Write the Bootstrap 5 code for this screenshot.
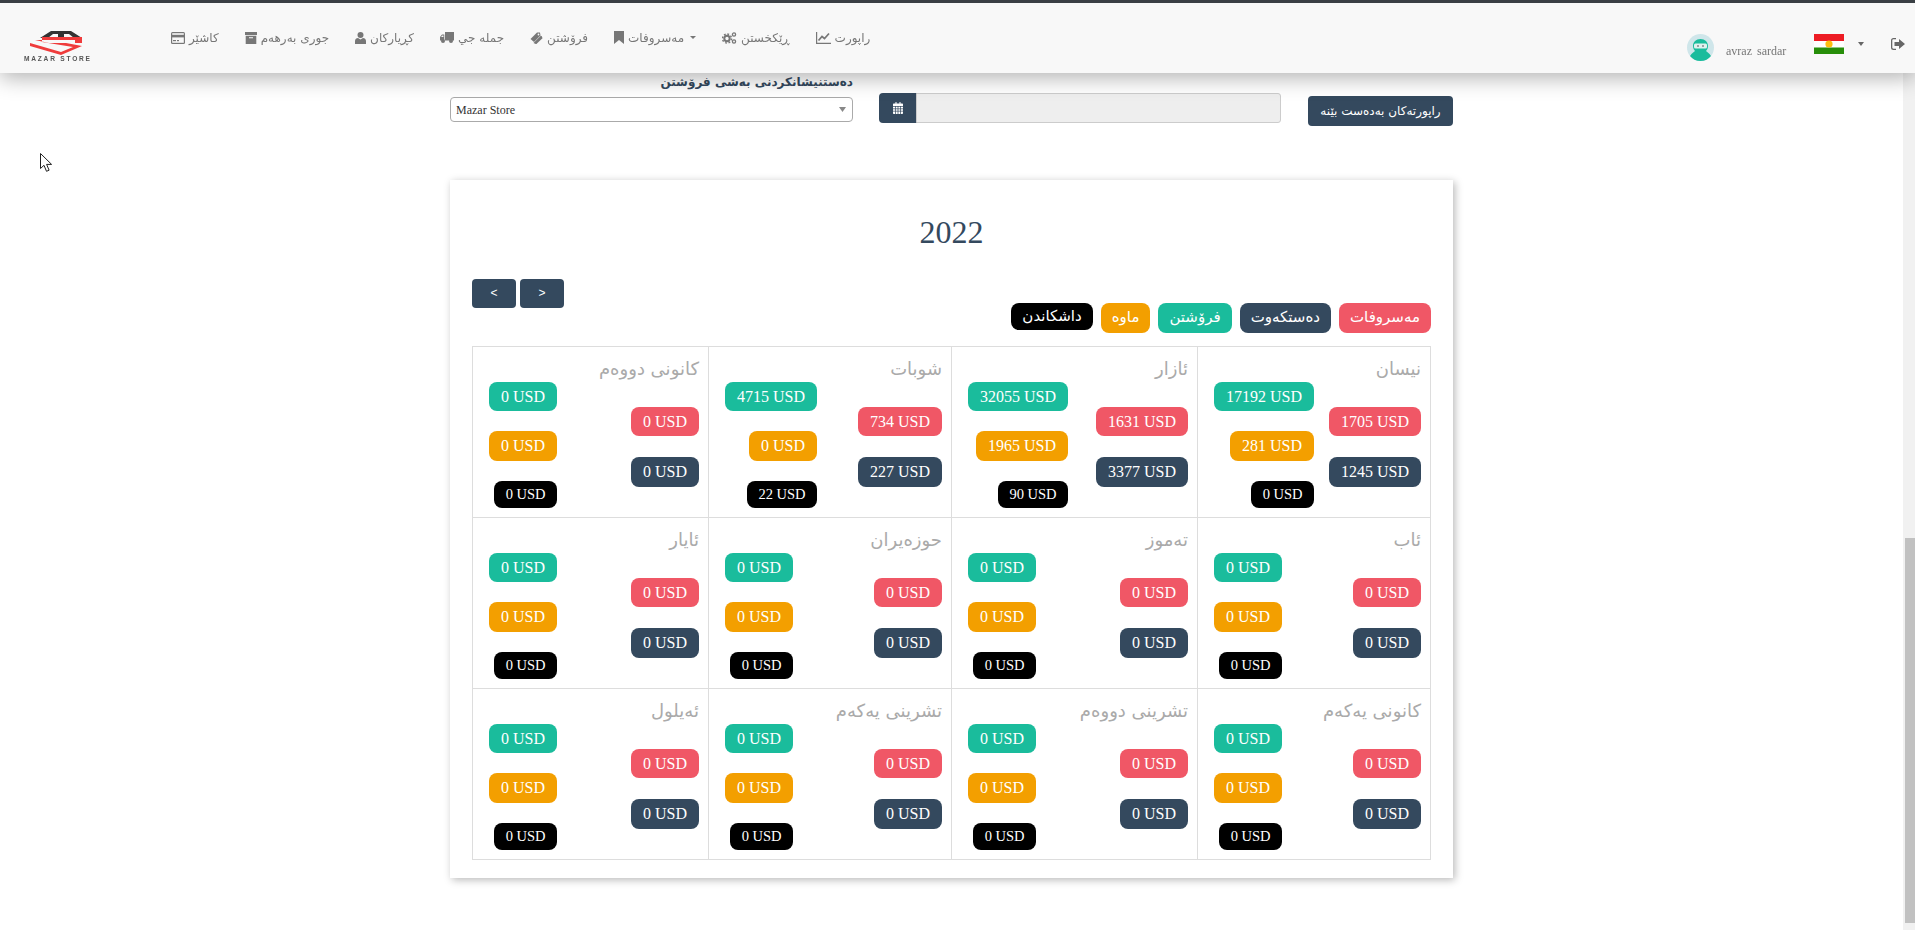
<!DOCTYPE html>
<html lang="ckb">
<head>
    <meta charset="UTF-8">
    <meta name="viewport" content="width=device-width, initial-scale=1.0">
    <title>Mazar Store - Reports</title>
    <link href="https://cdn.jsdelivr.net/npm/bootstrap@5.3.0/dist/css/bootstrap.min.css" rel="stylesheet">
    <style>
        html, body { height: 100%; overflow: hidden; }
        body {
            background: #fff;
            font-family: "Liberation Serif", "DejaVu Sans", serif;
            color: #34495e;
        }
        .ar { font-family: "DejaVu Sans", sans-serif; }
        .top-strip { height: 3px; background: #3a3f44; position: relative; z-index: 6; }
        .main-nav {
            height: 70px;
            background: #f8f8f8;
            box-shadow: 0 5px 20px rgba(0,0,0,.3);
            position: relative;
            z-index: 5;
            padding-left: 24px;
        }
        .site-logo { width: 66px; height: 34px; margin-top: 26px; display: block; filter: blur(.6px); }
        .site-logo text { font: bold 6.6px "Liberation Sans", sans-serif; fill: #555; }
        .nav-items { margin-left: 81px; gap: 26px; height: 100%; padding-bottom: 1px; }
        .nav-entry {
            color: #777;
            font-size: 12px;
            text-decoration: none;
            display: flex;
            align-items: center;
            gap: 4px;
            white-space: nowrap;
        }
        .nav-entry svg { fill: #777; flex: none; }
        .nav-entry.dropdown-toggle::after { margin-left: 2px; vertical-align: 0; color: #777; border-top-width: .3em; border-right-width: .3em; border-left-width: .3em; }
        .user-box { margin-left: auto; padding-top: 31px; height: 100%; }
        .user-name { font-size: 12px; color: #777; margin-left: 12px; width: 61px; white-space: nowrap; margin-top: 8px; word-spacing: 2px; }
        .user-flag { margin-left: 27px; }
        .flag-caret { width: 0; height: 0; border-top: 4px solid #666; border-left: 3.5px solid transparent; border-right: 3.5px solid transparent; margin-left: 14px; margin-top: 8px; }
        .logout-ico { margin-left: 27px; margin-right: 10px; margin-top: 4px; fill: #666; }

        .page-body { width: 1003px; margin-left: 450px; }
        .filter-row { height: 107px; align-items: flex-start; }
        .filter-store { width: 403px; }
        .filter-label { font-size: 12px; font-weight: 700; line-height: 18px; margin: 0 0 6px; color: #34495e; height: 18px; }
        .store-select {
            height: 25px;
            padding: 0 20px 0 5px;
            font: 12px "Liberation Serif", serif;
            color: #333;
            border: 1px solid #aaa;
            border-radius: 4px;
            background-position: right 6px center;
            background-size: 7px 5px;
            background-image: url("data:image/svg+xml,%3csvg xmlns='http://www.w3.org/2000/svg' viewBox='0 0 7 5'%3e%3cpath fill='%23888' d='M0 0h7L3.5 5z'/%3e%3c/svg%3e");
        }
        .filter-range { width: 402px; margin-left: 26px; margin-top: 20px; }
        .filter-range .input-group-text { width: 38px; height: 30px; padding: 0; justify-content: center; background: #34495e; border: 0; border-radius: 4px 0 0 4px; }
        .filter-range .form-control { height: 30px; background: #eee; border: 1px solid #ccc; border-radius: 0 3px 3px 0; }
        .btn-navy { background: #34495e; color: #fff; border: 0; border-radius: 4px; }
        .btn-navy:hover { background: #34495e; color: #fff; }
        .btn-report { width: 145px; height: 30px; margin-left: 27px; margin-top: 23px; padding: 0; font-size: 12px; white-space: nowrap; }

        .year-card {
            height: 698px;
            padding: 0 22px;
            background: #fff;
            box-shadow: 2px 2px 8px rgba(0,0,0,.28);
        }
        .year-title { font: 32px/36px "Liberation Serif", serif; color: #34495e; text-align: center; margin: 0; padding-top: 34px; height: 99px; }
        .tool-row { height: 67px; align-items: flex-start; }
        .arrow-btn { width: 44px; height: 29px; padding: 0; font: 12px/29px "Liberation Sans", sans-serif; }
        .legend-list { margin-top: 24px; gap: 8px; }
        .legend-pill { height: 30px; line-height: 28px; padding: 0 11px; font-size: 15px; color: #fff; border-radius: 8px; white-space: nowrap; }
        .legend-pill.is-short { height: 27px; line-height: 26px; }
        .tone-red { background: #f05766; }
        .tone-navy { background: #34495e; }
        .tone-teal { background: #1abc9c; }
        .tone-orange { background: #f39f00; }
        .tone-black { background: #000; }

        .month-grid { table-layout: fixed; width: 959px; border-collapse: collapse; margin-left: 0; }
        .month-grid td { height: 171px; border: 1px solid #ddd; padding: 8px 9px 0 16px; vertical-align: top; }
        .month-title { font-size: 18px; line-height: 27px; color: #aaa; text-align: right; white-space: nowrap; }
        .col-amounts { gap: 21px; align-items: flex-start; }
        .col-amounts.is-side { margin-top: 25px; }
        .col-amounts.is-main { gap: 20px; }
        .amt-pill { font-size: 16px; line-height: 29px; height: 29px; padding: 0 12px; color: #fff; border-radius: 8px; white-space: nowrap; direction: ltr; }
        .amt-pill.is-tall { height: 30px; }
        .amt-pill.is-small { font-size: 14.5px; height: 27px; line-height: 26px; padding: 0 11.5px; }

        .mouse-pointer { position: fixed; left: 40px; top: 153px; z-index: 9; }
        .fake-scroll { position: fixed; right: 0; top: 73px; bottom: 0; width: 12px; background: #f1f1f1; z-index: 4; }
        .fake-thumb { position: absolute; left: 2px; right: 0; top: 465px; height: 385px; background: #c1c1c1; }
    </style>
</head>
<body>
    <div class="top-strip"></div>
    <nav class="main-nav d-flex">
        <svg class="site-logo" viewBox="0 0 66 34">
            <path fill="#333" d="M16 9 27 2h20l11 7-8 0-5-4h-5v5h-6V5h-5l-5 4z"/>
            <path fill="#ef3b3b" d="M6 8h52v6l-16 0 16 3-21 9-31-9v-3l31 9 12-5-31-5V8zm5 3 14 3h26v-3z"/>
            <text x="0" y="32" textLength="66">MAZAR STORE</text>
        </svg>
        <div class="nav-items d-flex align-items-center">
            <a class="nav-entry" href="#">
                <svg width="14" height="12" viewBox="0 0 14 12"><rect width="14" height="12" rx="1.5"/><rect x="1.2" y="1.2" width="11.6" height="1.6" fill="#f8f8f8"/><rect x="1.2" y="5.4" width="11.6" height="5.4" fill="#f8f8f8"/><rect x="2" y="8" width="3" height="1.2"/><rect x="6" y="8" width="2" height="1.2"/></svg>
                <span class="ar">کاشێر</span>
            </a>
            <a class="nav-entry" href="#">
                <svg width="12" height="12" viewBox="0 0 12 12"><rect width="12" height="3"/><path d="M.7 3.8h10.6V12H.7zM4 5.2v1h4v-1z" fill-rule="evenodd"/></svg>
                <span class="ar">جوری بەرهەم</span>
            </a>
            <a class="nav-entry" href="#">
                <svg width="11" height="12" viewBox="0 0 11 12"><circle cx="5.5" cy="3" r="3"/><path d="M0 12V9c0-2 1.500-3 3-3l2.500 1.500L8 6c1.500 0 3 1 3 3v3z"/></svg>
                <span class="ar">کڕیارکان</span>
            </a>
            <a class="nav-entry" href="#">
                <svg width="14" height="11" viewBox="0 0 14 11"><path d="M5 0h9v8.500H5zM4.300 2.500H2L0 5v3.500h4.300zM1 5l1.400-1.600h1V5z" fill-rule="evenodd"/><circle cx="3" cy="9" r="2"/><circle cx="11" cy="9" r="2"/></svg>
                <span class="ar">جملە جي</span>
            </a>
            <a class="nav-entry" href="#">
                <svg width="13" height="12" viewBox="0 0 13 12"><path d="M.5 7 7 .5h3l.5 3L4 10z"/><path d="M3.500 11 10.800 3.700l1 .5.700 2-6.300 6z" /><circle cx="8.500" cy="2.500" r=".9" fill="#f8f8f8"/></svg>
                <span class="ar">فرۆشتن</span>
            </a>
            <a class="nav-entry dropdown-toggle" href="#">
                <svg width="10" height="13" viewBox="0 0 10 13"><path d="M0 0h10v13L5 9l-5 4z"/></svg>
                <span class="ar">مەسروفات</span>
            </a>
            <a class="nav-entry" href="#">
                <svg width="15" height="12" viewBox="0 0 15 12"><circle cx="5" cy="6.500" r="2.700" fill="none" stroke="#777" stroke-width="2"/><circle cx="5" cy="6.500" r="4.500" fill="none" stroke="#777" stroke-width="1.500" stroke-dasharray="1.800 1.700"/><circle cx="12" cy="2.500" r="1.600" fill="none" stroke="#777" stroke-width="1.300"/><circle cx="12" cy="9.500" r="1.600" fill="none" stroke="#777" stroke-width="1.300"/></svg>
                <span class="ar">ڕێکخستن</span>
            </a>
            <a class="nav-entry" href="#">
                <svg width="15" height="12" viewBox="0 0 15 12"><path d="M0 0h1.200v10.800H15V12H0z"/><path d="M2.500 8.500 6 4.500l2.500 2L13 1.500" fill="none" stroke="#777" stroke-width="1.700"/></svg>
                <span class="ar">راپورت</span>
            </a>
        </div>
        <div class="user-box d-flex align-items-start">
            <svg width="27" height="27" viewBox="0 0 27 27">
                <circle cx="13.500" cy="13.500" r="13.500" fill="#cfe6ea"/>
                <path fill="#1abc9c" d="M3 22c2-3 4-4 5-5-1-1-2-3-2-5 0-4 3-7 7.500-7S21 8 21 12c0 2-1 4-2 5 1 1 3 2 5 5-2.500 3-6 5-10.500 5S5.500 25 3 22z"/>
                <rect x="7" y="9.500" width="13" height="5" rx="1.500" fill="#dff1ee"/>
                <circle cx="11" cy="12" r="1" fill="#7f8c8d"/><circle cx="16" cy="12" r="1" fill="#7f8c8d"/>
            </svg>
            <span class="user-name">avraz sardar</span>
            <svg class="user-flag" width="30" height="20" viewBox="0 0 30 20">
                <rect width="30" height="7" fill="#ed1c24"/><rect y="7" width="30" height="7" fill="#fff"/><rect y="13.500" width="30" height="6.500" fill="#278e0a"/>
                <circle cx="15" cy="10" r="3.600" fill="#fdbf10"/>
            </svg>
            <span class="flag-caret"></span>
            <svg class="logout-ico" width="14" height="12" viewBox="0 0 14 12"><path d="M5 0v1.300H2.500c-.7 0-1.200.5-1.200 1.200v7c0 .7.500 1.200 1.200 1.200H5V12H2.500A2.500 2.500 0 0 1 0 9.500v-7A2.500 2.500 0 0 1 2.500 0z"/><path d="M8 1l6 5-6 5V8H3.500V4H8z"/></svg>
        </div>
    </nav>

    <main class="page-body">
        <div class="filter-row d-flex">
            <div class="filter-store">
                <div class="filter-label ar text-end">دەستنیشانکردنی بەشی فرۆشتن</div>
                <select class="form-select store-select"><option>Mazar Store</option></select>
            </div>
            <div class="filter-range input-group">
                <span class="input-group-text">
                    <svg width="10" height="12" viewBox="0 0 10 12"><path fill="#fff" d="M1 1.500h1.500V0h1v1.500h3V0h1v1.500H9c.6 0 1 .4 1 1V11c0 .6-.4 1-1 1H1c-.6 0-1-.4-1-1V2.500c0-.6.400-1 1-1z"/><path stroke="#34495e" stroke-width=".7" d="M0 4.500h10M0 6.800h10M0 9.200h10M2.500 4v8M5 4v8M7.500 4v8"/></svg>
                </span>
                <input type="text" class="form-control" disabled>
            </div>
            <button class="btn btn-navy btn-report ar" type="button">راپورتەکان بەدەست بێنە</button>
        </div>

        <section class="year-card">
            <h2 class="year-title">2022</h2>
            <div class="tool-row d-flex justify-content-between">
                <div class="d-flex gap-1">
                    <button class="btn btn-navy arrow-btn" type="button">&lt;</button>
                    <button class="btn btn-navy arrow-btn" type="button">&gt;</button>
                </div>
                <div class="legend-list d-flex align-items-start ar" dir="rtl">
                    <span class="legend-pill tone-red">مەسروفات</span>
                    <span class="legend-pill tone-navy">دەستکەوت</span>
                    <span class="legend-pill tone-teal">فرۆشتن</span>
                    <span class="legend-pill tone-orange">ماوە</span>
                    <span class="legend-pill is-short tone-black">داشکاندن</span>
                </div>
            </div>
            <table class="month-grid" dir="rtl">
                <colgroup><col id="m1"><col id="m2"><col id="m3"><col id="m4"></colgroup>
                <tbody id="monthRows"></tbody>
            </table>
        </section>
    </main>

    <svg class="mouse-pointer" width="13" height="20" viewBox="0 0 13 20"><path fill="#fff" stroke="#222" stroke-width="1" d="M.5.500v15l3.500-3.200 2.500 6 2.600-1.100-2.500-5.800h5z"/></svg>
    <div class="fake-scroll"><div class="fake-thumb"></div></div>

    <script src="https://cdn.jsdelivr.net/npm/bootstrap@5.3.0/dist/js/bootstrap.bundle.min.js"></script>
    <script>
        // [name, expenses, income, sales, remaining, discount]
        const months = [
            ['نیسان', 1705, 1245, 17192, 281, 0],
            ['ئازار', 1631, 3377, 32055, 1965, 90],
            ['شوبات', 734, 227, 4715, 0, 22],
            ['کانونی دووەم', 0, 0, 0, 0, 0],
            ['ئاب', 0, 0, 0, 0, 0],
            ['تەموز', 0, 0, 0, 0, 0],
            ['حوزەیران', 0, 0, 0, 0, 0],
            ['ئایار', 0, 0, 0, 0, 0],
            ['کانونی یەکەم', 0, 0, 0, 0, 0],
            ['تشرینی دووەم', 0, 0, 0, 0, 0],
            ['تشرینی یەکەم', 0, 0, 0, 0, 0],
            ['ئەیلول', 0, 0, 0, 0, 0]
        ];
        const widths = [233, 246, 243, 236];
        widths.forEach((w, i) => { document.getElementById('m' + (i + 1)).style.width = w + 'px'; });

        let html = '';
        months.forEach((m, i) => {
            if (i % 4 === 0) html += '<tr>';
            html += `<td>
                <div class="month-title ar">${m[0]}</div>
                <div class="d-flex justify-content-between">
                    <div class="col-amounts is-side d-flex flex-column">
                        <span class="amt-pill tone-red">${m[1]} USD</span>
                        <span class="amt-pill is-tall tone-navy">${m[2]} USD</span>
                    </div>
                    <div class="col-amounts is-main d-flex flex-column">
                        <span class="amt-pill tone-teal">${m[3]} USD</span>
                        <span class="amt-pill is-tall tone-orange">${m[4]} USD</span>
                        <span class="amt-pill is-small tone-black">${m[5]} USD</span>
                    </div>
                </div>
            </td>`;
            if (i % 4 === 3) html += '</tr>';
        });
        document.getElementById('monthRows').innerHTML = html;
    </script>
</body>
</html>
